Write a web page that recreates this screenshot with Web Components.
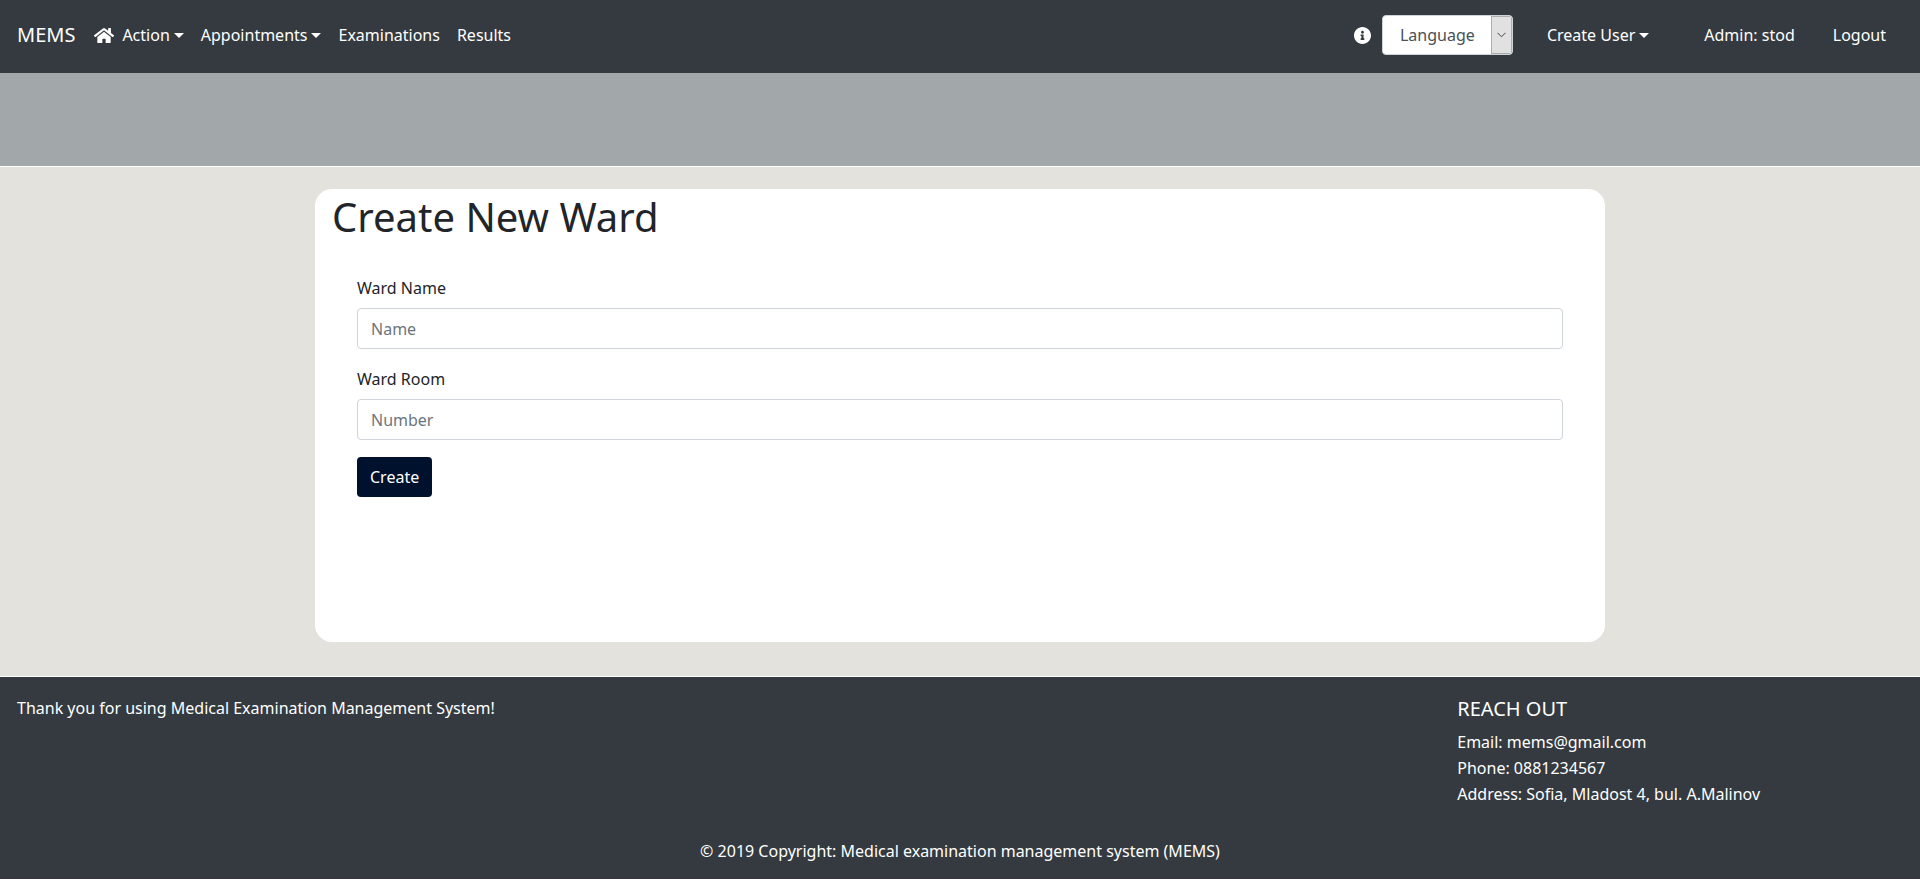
<!DOCTYPE html>
<html lang="en">
<head>
<meta charset="utf-8">
<meta name="viewport" content="width=device-width, initial-scale=1">
<title>Create New Ward - MEMS</title>
<style>
html, body { margin: 0; }
body { font: 16px/26px "Noto Sans", "Open Sans", sans-serif; color: #212529; background: #fff; }
</style>
</head>
<body>
<mems-page>
  <mems-navbar slot="nav">
    <nav-link slot="start" icon="home" caret>Action</nav-link>
    <nav-link slot="start" caret>Appointments</nav-link>
    <nav-link slot="start">Examinations</nav-link>
    <nav-link slot="start">Results</nav-link>
    <language-picker slot="end"></language-picker>
    <nav-link slot="end" class="user" caret>Create User</nav-link>
    <nav-link slot="end" class="admin">Admin: stod</nav-link>
    <nav-link slot="end" class="logout">Logout</nav-link>
  </mems-navbar>
  <ward-card heading="Create New Ward">
    <ward-form></ward-form>
  </ward-card>
  <mems-footer slot="footer"></mems-footer>
</mems-page>
<script>
const define = (name, html, setup) => {
  const template = document.createElement('template');
  template.innerHTML = html;
  customElements.define(name, class extends HTMLElement {
    constructor() {
      super();
      this.attachShadow({ mode: 'open' }).append(template.content.cloneNode(true));
    }
    connectedCallback() { if (setup) setup(this, this.shadowRoot); }
  });
};

define('mems-page', `
<style>
:host { display: flex; flex-direction: column; min-height: 100vh; }
.banner { height: 93px; background: #a2a7a9; border-bottom: 1px solid #fff; }
main { background: #e3e2dd; padding: 22px 16px 34px; border-bottom: 1px solid #fff; }
.foot { flex: 1; display: grid; }
</style>
<slot name="nav"></slot>
<div class="banner"></div>
<main><slot></slot></main>
<div class="foot"><slot name="footer"></slot></div>`);

define('mems-navbar', `
<style>
:host { display: block; background: #343a40; color: #fff; }
nav { display: flex; align-items: center; min-height: 73px; padding: 0 34px 3px 17px; box-sizing: border-box; }
.brand { color: inherit; text-decoration: none; font-size: 20px; margin-right: 19px; }
.group { display: flex; align-items: center; gap: 17px; }
.end { margin-left: auto; gap: 34px; }
::slotted(.admin) { margin-left: 21px; }
::slotted(.logout) { margin-left: 4px; }
</style>
<nav>
  <a class="brand" href="#">MEMS</a>
  <div class="group"><slot name="start"></slot></div>
  <div class="group end"><slot name="end"></slot></div>
</nav>`);

define('nav-link', `
<style>
:host { display: block; }
a { display: flex; align-items: center; color: inherit; text-decoration: none; white-space: nowrap; }
svg { width: 20px; height: 17px; margin-right: 8px; fill: currentColor; }
.caret { display: none; margin-left: 4px; border: 5px solid transparent; border-top-color: currentColor; border-bottom: 0; }
:host([caret]) .caret { display: block; }
svg { display: none; }
:host([icon="home"]) svg { display: block; }
</style>
<a href="#">
  <svg viewBox="0 0 576 512" preserveAspectRatio="none" aria-hidden="true"><path d="M280.37 148.26L96 300.11V464a16 16 0 0 0 16 16l112.06-.29a16 16 0 0 0 15.92-16V368a16 16 0 0 1 16-16h64a16 16 0 0 1 16 16v95.64a16 16 0 0 0 16 16.05L464 480a16 16 0 0 0 16-16V300L295.67 148.26a12.19 12.19 0 0 0-15.3 0zM571.6 251.47L488 182.56V44.05a12 12 0 0 0-12-12h-56a12 12 0 0 0-12 12v72.61L318.47 43a48 48 0 0 0-61 0L4.34 251.47a12 12 0 0 0-1.6 16.9l25.5 31A12 12 0 0 0 45.15 301l235.22-193.74a12.19 12.19 0 0 1 15.3 0L530.9 301a12 12 0 0 0 16.9-1.6l25.5-31a12 12 0 0 0-1.7-16.93z"/></svg>
  <slot></slot><span class="caret"></span>
</a>`);

define('language-picker', `
<style>
:host { display: flex; align-items: center; gap: 11px; }
.info { width: 17px; height: 17px; fill: #fff; }
.field { display: grid; grid-template-columns: 1fr 21px; box-sizing: border-box; width: 131px; height: 40px; border: 1px solid #ced4da; border-radius: 4px; background: #fff; overflow: hidden; }
select { grid-area: 1 / 1 / 2 / 3; appearance: none; margin: 0; border: 0; padding: 0 21px 0 17px; background: transparent; color: #495057; font: inherit; }
.arrow { grid-area: 1 / 2; pointer-events: none; display: grid; place-items: center; box-sizing: border-box; border: 1px solid #adadad; background: #e1e1e1; }
.arrow svg { width: 9px; height: 6px; fill: none; stroke: #444; }
</style>
<svg class="info" viewBox="8 8 496 496" aria-hidden="true"><path d="M256 8C119.043 8 8 119.083 8 256c0 136.997 111.043 248 248 248s248-111.003 248-248C504 119.083 392.957 8 256 8zm0 110c23.196 0 42 18.804 42 42s-18.804 42-42 42-42-18.804-42-42 18.804-42 42-42zm56 254c0 6.627-5.373 12-12 12h-88c-6.627 0-12-5.373-12-12v-24c0-6.627 5.373-12 12-12h12v-64h-12c-6.627 0-12-5.373-12-12v-24c0-6.627 5.373-12 12-12h64c6.627 0 12 5.373 12 12v100h12c6.627 0 12 5.373 12 12v24z"/></svg>
<div class="field">
  <select aria-label="Language"><option>Language</option></select>
  <span class="arrow"><svg viewBox="0 0 9 6" aria-hidden="true"><path d="M.5 .8 4.5 4.8 8.5 .8"/></svg></span>
</div>`);

define('ward-card', `
<style>
:host { display: block; box-sizing: border-box; max-width: 1290px; min-height: 453px; margin: 0 auto; padding: 0 17px 17px; border-radius: 17px; background: #fff; }
h1 { margin: 0; font-size: 40px; line-height: 56px; font-weight: 400; }
</style>
<h1></h1>
<slot></slot>`, (host, root) => { root.querySelector('h1').textContent = host.getAttribute('heading'); });

define('ward-form', `
<style>
:host { display: block; padding: 30px 25px 0; }
form { display: flex; flex-direction: column; align-items: flex-start; }
label { margin-bottom: 7px; }
input { box-sizing: border-box; width: 100%; height: 41px; margin: 0 0 17px; padding: 0 13px; border: 1px solid #ced4da; border-radius: 4px; background: #fff; color: #495057; font: inherit; }
input::placeholder { color: #6c757d; opacity: 1; }
button { height: 40px; padding: 0 13px; border: 0; border-radius: 4px; background: #00112e; color: #fff; font: inherit; }
</style>
<form>
  <label for="name">Ward Name</label>
  <input id="name" type="text" placeholder="Name">
  <label for="room">Ward Room</label>
  <input id="room" type="text" placeholder="Number">
  <button type="button">Create</button>
</form>`);

define('mems-footer', `
<style>
:host { display: block; background: #343a40; color: #fff; padding-top: 18px; }
.columns { display: grid; grid-template-columns: 3fr 1fr; padding-left: 17px; min-height: 143px; }
.reach { padding-left: 13px; }
p, h5, ul { margin: 0; padding: 0; }
h5 { font-size: 20px; line-height: 28px; font-weight: 400; margin-bottom: 6px; }
ul { list-style: none; }
.copy { text-align: center; padding-bottom: 14px; border-bottom: 1px solid #37323c; }
</style>
<footer>
  <div class="columns">
    <p>Thank you for using Medical Examination Management System!</p>
    <div class="reach">
      <h5>REACH OUT</h5>
      <ul><li>Email: mems@gmail.com</li><li>Phone: 0881234567</li><li>Address: Sofia, Mladost 4, bul. A.Malinov</li></ul>
    </div>
  </div>
  <p class="copy">© 2019 Copyright: Medical examination management system (MEMS)</p>
</footer>`);
</script>
</body>
</html>
